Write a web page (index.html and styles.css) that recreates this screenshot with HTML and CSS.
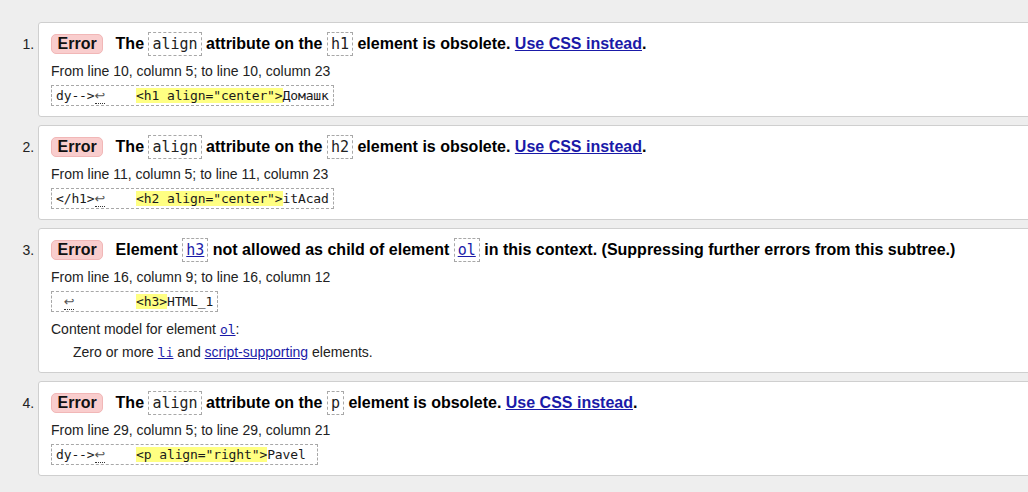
FILE: index.html
```html
<!DOCTYPE html>
<html lang="en">
<head>
<meta charset="utf-8">
<title>Validation results</title>
<link rel="stylesheet" href="styles.css">
</head>
<body>
<ol class="messages">
  <li class="msg">
    <p class="msg-title"><strong class="badge">Error</strong> <span>The <code class="tok">align</code> attribute on the <code class="tok">h1</code> element is obsolete. <a href="#">Use CSS instead</a>.</span></p>
    <p class="location">From line 10, column 5; to line 10, column 23</p>
    <p class="extract"><code>dy--&gt;<span class="lf">↩</span>    <mark>&lt;h1 align="center"&gt;</mark>Домашк</code></p>
  </li>
  <li class="msg">
    <p class="msg-title"><strong class="badge">Error</strong> <span>The <code class="tok">align</code> attribute on the <code class="tok">h2</code> element is obsolete. <a href="#">Use CSS instead</a>.</span></p>
    <p class="location">From line 11, column 5; to line 11, column 23</p>
    <p class="extract"><code>&lt;/h1&gt;<span class="lf">↩</span>    <mark>&lt;h2 align="center"&gt;</mark>itAcad</code></p>
  </li>
  <li class="msg">
    <p class="msg-title"><strong class="badge">Error</strong> <span>Element <code class="tok"><a href="#">h3</a></code> not allowed as child of element <code class="tok"><a href="#">ol</a></code> in this context. (Suppressing further errors from this subtree.)</span></p>
    <p class="location">From line 16, column 9; to line 16, column 12</p>
    <p class="extract"><code> <span class="lf">↩</span>        <mark>&lt;h3&gt;</mark>HTML_1</code></p>
    <p class="model">Content model for element <a href="#"><code class="ref">ol</code></a>:</p>
    <p class="model-desc">Zero or more <a href="#"><code class="ref">li</code></a> and <a href="#">script-supporting</a> elements.</p>
  </li>
  <li class="msg">
    <p class="msg-title"><strong class="badge">Error</strong> <span>The <code class="tok">align</code> attribute on the <code class="tok">p</code> element is obsolete. <a href="#">Use CSS instead</a>.</span></p>
    <p class="location">From line 29, column 5; to line 29, column 21</p>
    <p class="extract"><code>dy--&gt;<span class="lf">↩</span>    <mark>&lt;p align="right"&gt;</mark>Pavel </code></p>
  </li>
</ol>
</body>
</html>
```

FILE: styles.css
```css
html, body {
  overflow: hidden;
}

body {
  margin: 0;
  background: #eeeeee;
  font-family: "Liberation Sans", Arial, sans-serif;
  color: #000;
}

.messages {
  margin: 0 -40px 0 0;
  padding: 22px 0 0 38px;
  list-style: decimal outside;
}

.msg {
  background: #fff;
  border: 1px solid #cfcfcf;
  border-radius: 3px;
  padding: 9px 12px 10px;
  margin-bottom: 8px;
  font-size: 14px;
}

.msg::marker {
  color: #222;
}

.msg a {
  color: #1a1aa8;
  text-decoration: underline;
}

.msg-title {
  margin: 0;
  font-size: 16px;
  font-weight: bold;
  line-height: 24px;
  white-space: nowrap;
}

.badge {
  display: inline-block;
  line-height: 18px;
  padding: 0 5.5px;
  border: 1px solid #f1b7b7;
  background: #f9cdcd;
  border-radius: 5px;
  margin-right: 8px;
  color: #111;
}

.tok {
  display: inline-block;
  vertical-align: top;
  font-family: "DejaVu Sans Mono", monospace;
  font-size: 15px;
  font-weight: normal;
  line-height: 18px;
  padding: 2px 3px;
  border: 1px dashed #a8a8a8;
  color: #222;
}

.location {
  margin: 6px 0 0;
  line-height: 18px;
  color: #222;
}

.extract {
  margin: 5px 0 0;
  line-height: 0;
}

.extract code {
  display: inline-block;
  white-space: pre;
  font-family: "DejaVu Sans Mono", monospace;
  font-size: 13px;
  letter-spacing: -0.12px;
  line-height: 15px;
  padding: 2px 4px;
  border: 1px dashed #a8a8a8;
  color: #1a1a1a;
}

.extract mark {
  background: #ffff82;
  color: inherit;
}

.lf {
  font-family: "DejaVu Sans", sans-serif;
  font-size: 12.8px;
  letter-spacing: 0;
  color: #555;
  border-bottom: 1px dotted #333;
}

.model {
  margin: 8px 0 0;
  line-height: 18px;
  color: #222;
}

.model-desc {
  margin: 4px 0 0;
  padding-left: 22px;
  line-height: 18px;
  color: #222;
}

.ref {
  font-family: "DejaVu Sans Mono", monospace;
  font-size: 13px;
}
```
